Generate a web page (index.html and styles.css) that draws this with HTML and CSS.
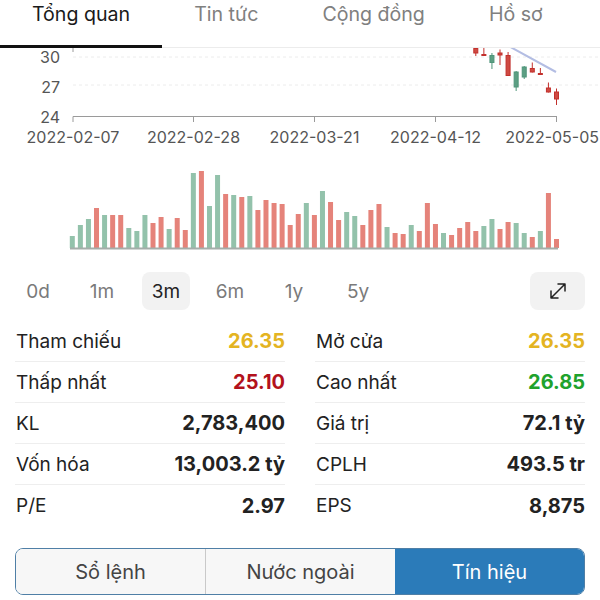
FILE: index.html
```html
<!DOCTYPE html>
<html lang="vi">
<head>
    <meta charset="UTF-8">
    <meta name="viewport" content="width=device-width, initial-scale=1.0">
    <title>Tổng quan</title>
    <link rel="stylesheet" href="styles.css">
</head>
<body>

    <header class="tabs">
        <a class="tab active">Tổng quan</a>
        <a class="tab">Tin tức</a>
        <a class="tab">Cộng đồng</a>
        <a class="tab">Hồ sơ</a>
    </header>

    <section class="chart">
        <!-- viewBox dùng toạ độ của trang để dễ canh -->
        <svg id="chart" width="600" height="212" viewBox="0 48 600 212">
            <g class="grid">
                <line x1="73" y1="57" x2="600" y2="57"></line>
                <line x1="73" y1="85" x2="600" y2="85"></line>
            </g>
            <line class="axis" x1="73" y1="48" x2="73" y2="52"></line>
            <line class="axis" x1="73" y1="116.5" x2="557" y2="116.5"></line>
            <g id="ticks"></g>
            <g class="ylabels">
                <text x="60" y="63">30</text>
                <text x="60" y="93">27</text>
                <text x="60" y="123">24</text>
            </g>
            <g class="xlabels">
                <text x="73" y="143">2022-02-07</text>
                <text x="193.5" y="143">2022-02-28</text>
                <text x="314.5" y="143">2022-03-21</text>
                <text x="435.5" y="143">2022-04-12</text>
                <text class="last" x="599" y="143">2022-05-05</text>
            </g>
            <line class="ma" x1="505" y1="44" x2="556" y2="72"></line>
            <g id="candles"></g>
            <g id="volume"></g>
            <line class="vol-base" x1="70" y1="248.5" x2="558" y2="248.5"></line>
        </svg>
    </section>

    <div class="periods">
        <div class="period-list">
            <button class="period">0d</button>
            <button class="period">1m</button>
            <button class="period active">3m</button>
            <button class="period">6m</button>
            <button class="period">1y</button>
            <button class="period">5y</button>
        </div>
        <button class="expand">
            <svg width="22" height="22" viewBox="0 0 22 22">
                <path d="M4 18 L18 4 M11 4 H18 V11 M4 11 V18 H11" fill="none" stroke="#222" stroke-width="1.5" stroke-linecap="round" stroke-linejoin="round"/>
            </svg>
        </button>
    </div>

    <div class="stats">
        <div class="stat-col">
            <div class="stat-row"><span class="label">Tham chiếu</span><span class="value ref">26.35</span></div>
            <div class="stat-row"><span class="label">Thấp nhất</span><span class="value down">25.10</span></div>
            <div class="stat-row"><span class="label">KL</span><span class="value">2,783,400</span></div>
            <div class="stat-row"><span class="label">Vốn hóa</span><span class="value">13,003.2 tỷ</span></div>
            <div class="stat-row"><span class="label">P/E</span><span class="value">2.97</span></div>
        </div>
        <div class="stat-col">
            <div class="stat-row"><span class="label">Mở cửa</span><span class="value ref">26.35</span></div>
            <div class="stat-row"><span class="label">Cao nhất</span><span class="value up">26.85</span></div>
            <div class="stat-row"><span class="label">Giá trị</span><span class="value">72.1 tỷ</span></div>
            <div class="stat-row"><span class="label">CPLH</span><span class="value">493.5 tr</span></div>
            <div class="stat-row"><span class="label">EPS</span><span class="value">8,875</span></div>
        </div>
    </div>

    <div class="segment">
        <button class="seg">Sổ lệnh</button>
        <button class="seg">Nước ngoài</button>
        <button class="seg active">Tín hiệu</button>
    </div>

    <script>
        const NS = 'http://www.w3.org/2000/svg';
        const step = 8.07;
        const x0 = 72.3;
        const base = 248;

        // khối lượng giao dịch 61 phiên
        const heights = [
            12, 23, 29, 40, 33, 33, 33, 20, 17, 33,
            25, 31, 19, 30, 18, 75, 77, 42, 73, 54,
            53, 51, 52, 38, 48, 45, 44, 23, 34, 45,
            33, 57, 46, 28, 36, 32, 23, 38, 44, 21,
            15, 14, 23, 17, 45, 24, 15, 13, 20, 26,
            17, 22, 29, 19, 26, 25, 15, 11, 17, 55, 9
        ];
        const colors = 'gggrgrrggg' + 'rrgrrgrggr' + 'grgrrrrrrg' + 'rgrrggrrrg' + 'rrgrrrgrrr' + 'rggrrggrgrr';

        function el(name, attrs) {
            const node = document.createElementNS(NS, name);
            for (const k in attrs) node.setAttribute(k, attrs[k]);
            return node;
        }

        const volume = document.getElementById('volume');
        heights.forEach((h, i) => {
            const cx = x0 + i * step;
            volume.appendChild(el('rect', {
                x: cx - 2.5, y: base - h, width: 5, height: h,
                class: colors[i] === 'g' ? 'vol-up' : 'vol-down'
            }));
        });

        // nến: [phiên, màu, râu trên, râu dưới, thân trên, thân dưới]
        const candles = [
            [50, 'r', 47, 56, 48.5, 53],
            [51, 'r', 48, 55.5, 54.5, 55.5],
            [52, 'g', 53, 69, 55.5, 62.5],
            [53, 'r', 49.5, 65, 53, 55],
            [54, 'r', 52, 75.5, 55.5, 75.5],
            [55, 'g', 71, 91, 72, 87],
            [56, 'g', 66, 79, 67, 77],
            [57, 'r', 62.5, 72.5, 68.5, 72],
            [58, 'r', 68, 74.5, 73.5, 74.5],
            [59, 'r', 82.5, 92.5, 88, 92],
            [60, 'r', 88.5, 105, 92, 99]
        ];
        const candleGroup = document.getElementById('candles');
        candles.forEach(([i, c, wt, wb, bt, bb]) => {
            const cx = x0 + i * step;
            const cls = c === 'g' ? 'candle-up' : 'candle-down';
            candleGroup.appendChild(el('line', { x1: cx, y1: wt, x2: cx, y2: wb, class: cls }));
            candleGroup.appendChild(el('rect', { x: cx - 2, y: bt, width: 4, height: bb - bt, class: cls }));
        });

        const ticks = document.getElementById('ticks');
        [73, 193.5, 314.5, 435.5, 556.5].forEach(x => {
            ticks.appendChild(el('line', { x1: x, y1: 116.5, x2: x, y2: 122, class: 'axis' }));
        });
    </script>

</body>
</html>
```

FILE: styles.css
```css
* {
    margin: 0;
    padding: 0;
    box-sizing: border-box;
}
body {
    width: 600px;
    height: 600px;
    overflow: hidden;
    font-family: 'Inter', 'Roboto', sans-serif;
    background-color: #fff;
    color: #222;
}
button {
    font-family: inherit;
    border: none;
    background: none;
    cursor: pointer;
}

/* Tabs */
.tabs {
    display: flex;
    height: 48px;
    border-bottom: 1px solid #ececec;
}
.tab {
    padding: 2px 32px 0;
    height: 48px;
    font-size: 19.6px;
    line-height: 24px;
    color: #808080;
}
.tab.active {
    color: #1a1a1a;
    border-bottom: 3px solid #111;
}

/* Chart */
.chart svg {
    display: block;
}
.grid line {
    stroke: #ececec;
    stroke-dasharray: 3 3;
}
.axis {
    stroke: #9a9a9a;
    stroke-width: 1;
}
.ylabels text {
    font-size: 16px;
    fill: #555;
    text-anchor: end;
}
.xlabels text {
    font-size: 16px;
    fill: #555;
    text-anchor: middle;
}
.xlabels text.last {
    text-anchor: end;
}
.ma {
    stroke: #b3bde3;
    stroke-width: 2;
}
.candle-up {
    stroke: #4f957a;
    fill: #5c9f83;
}
.candle-down {
    stroke: #c2302c;
    fill: #cf4a42;
}
.vol-up {
    fill: #93c2ab;
}
.vol-down {
    fill: #e5837a;
}
.vol-base {
    stroke: #a5aeaa;
    stroke-width: 2;
}

/* Periods */
.periods {
    display: flex;
    justify-content: space-between;
    align-items: center;
    padding: 0 15px 0 14px;
    margin-top: 12px;
}
.period-list {
    display: flex;
    gap: 16px;
}
.period {
    width: 48px;
    height: 38px;
    border-radius: 8px;
    font-size: 19px;
    color: #7a7a7a;
}
.period.active {
    background-color: #f2f2f2;
    color: #222;
}
.expand {
    width: 55px;
    height: 38px;
    border-radius: 8px;
    background-color: #f2f2f2;
    display: flex;
    align-items: center;
    justify-content: center;
}

/* Stats */
.stats {
    display: grid;
    grid-template-columns: 1fr 1fr;
    gap: 30px;
    padding: 0 15px;
    margin-top: 11px;
}
.stat-row {
    display: flex;
    justify-content: space-between;
    align-items: center;
    height: 41px;
    border-bottom: 1px solid #eeeeee;
    font-size: 19px;
}
.stat-row:last-child {
    border-bottom: none;
}
.label {
    padding-left: 1px;
}
.value {
    font-size: 20px;
    font-weight: 650;
}
.value.ref {
    color: #e4b422;
}
.value.down {
    color: #b3121c;
}
.value.up {
    color: #20a22c;
}

/* Segmented control */
.segment {
    display: flex;
    margin: 22px 15px 0;
    height: 47px;
    border: 1px solid #4f7fa6;
    border-radius: 8px;
    overflow: hidden;
}
.seg {
    flex: 1;
    font-size: 20px;
    color: #444;
    background-color: #f7f7f7;
}
.seg + .seg {
    border-left: 1px solid #c9c9c9;
}
.seg.active {
    background-color: #2b7bb9;
    color: #fff;
    border-left: none;
}
```
